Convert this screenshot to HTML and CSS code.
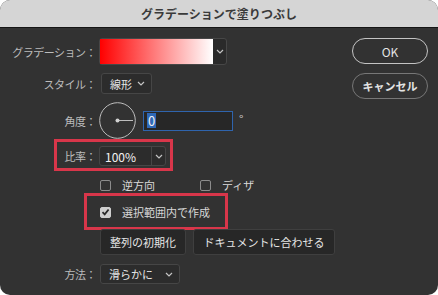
FILE: index.html
```html
<!DOCTYPE html>
<html lang="ja">
<head>
    <meta charset="UTF-8">
    <meta name="viewport" content="width=device-width, initial-scale=1.0">
    <title>グラデーションで塗りつぶし</title>
    <link rel="stylesheet" href="styles.css">
</head>
<body>
    <div class="dialog">
        <div class="titlebar">グラデーションで塗りつぶし</div>

        <div class="content">
            <div class="form">
                <!-- gradient -->
                <div class="row row-gradient">
                    <span class="lbl">グラデーション：</span>
                    <div class="gradient-picker">
                        <span class="swatch"></span>
                        <span class="picker-arrow">
                            <svg class="chev" width="8" height="5" viewBox="0 0 8 5"><path d="M1 1l3 3 3-3"/></svg>
                        </span>
                    </div>
                </div>

                <!-- style -->
                <div class="row row-style">
                    <span class="lbl">スタイル：</span>
                    <div class="select select-style">
                        <span>線形</span>
                        <svg class="chev" width="8" height="5" viewBox="0 0 8 5"><path d="M1 1l3 3 3-3"/></svg>
                    </div>
                </div>

                <!-- angle -->
                <div class="row row-angle">
                    <span class="lbl">角度：</span>
                    <div class="angle">
                        <svg class="dial" width="37" height="37" viewBox="0 0 37 37">
                            <circle cx="18.5" cy="18.5" r="17.8"/>
                            <line x1="18.5" y1="18.5" x2="34" y2="18.5"/>
                            <circle class="dot" cx="18.5" cy="18.5" r="2"/>
                        </svg>
                        <div class="num-input"><span class="sel">0</span></div>
                        <span class="deg">°</span>
                    </div>
                </div>

                <!-- ratio -->
                <div class="row row-ratio">
                    <span class="lbl">比率：</span>
                    <div class="select select-ratio">
                        <span class="val">100%</span>
                        <span class="split">
                            <svg class="chev" width="8" height="5" viewBox="0 0 8 5"><path d="M1 1l3 3 3-3"/></svg>
                        </span>
                    </div>
                    <span class="mark mark-ratio"></span>
                </div>

                <!-- options -->
                <div class="row row-checks">
                    <span></span>
                    <div class="checks">
                        <label class="check"><span class="box"></span>逆方向</label>
                        <label class="check"><span class="box"></span>ディザ</label>
                    </div>
                </div>

                <div class="row row-selection">
                    <span></span>
                    <label class="check">
                        <span class="box checked">
                            <svg width="9" height="8" viewBox="0 0 9 8"><path d="M1.5 4.2l2.2 2.2 3.9-4.9"/></svg>
                        </span>選択範囲内で作成
                    </label>
                    <span class="mark mark-selection"></span>
                </div>

                <div class="row row-buttons">
                    <span></span>
                    <div class="btns">
                        <button class="btn">整列の初期化</button>
                        <button class="btn">ドキュメントに合わせる</button>
                    </div>
                </div>

                <!-- method -->
                <div class="row row-method">
                    <span class="lbl">方法：</span>
                    <div class="select select-method">
                        <span>滑らかに</span>
                        <svg class="chev" width="8" height="5" viewBox="0 0 8 5"><path d="M1 1l3 3 3-3"/></svg>
                    </div>
                </div>
            </div>

            <div class="actions">
                <button class="pill pill-ok">OK</button>
                <button class="pill">キャンセル</button>
            </div>
        </div>
    </div>
</body>
</html>
```

FILE: styles.css
```css
* {
    box-sizing: border-box;
}

body {
    margin: 0;
    padding: 0;
    background: #ffffff;
    font-family: "Noto Sans CJK JP", "Noto Sans", sans-serif;
    font-size: 11px;
}

.dialog {
    width: 438px;
    height: 295px;
    background: #323232;
    border-radius: 10px;
    overflow: hidden;
}

.titlebar {
    height: 28px;
    line-height: 27px;
    background: #d5d5d5;
    border-bottom: 1px solid #151515;
    color: #3a3a3a;
    font-size: 12px;
    font-weight: bold;
    text-align: center;
}

.content {
    display: flex;
    padding: 10px 10px 0 0;
}

.form {
    flex: 1;
}

.row {
    position: relative;
    display: grid;
    grid-template-columns: 96px auto;
    column-gap: 4px;
    align-items: center;
    justify-items: start;
}

.lbl {
    justify-self: end;
    color: #bcbcbc;
    letter-spacing: -0.5px;
    white-space: nowrap;
}

.chev {
    display: block;
    fill: none;
    stroke: #c4c4c4;
    stroke-width: 1.2;
}

/* gradient picker */
.row-gradient {
    height: 27px;
}

.gradient-picker {
    display: flex;
    width: 128px;
    height: 27px;
    margin-left: -1px;
    border: 1px solid #474747;
    border-radius: 3px;
    background: #2a2a2a;
}

.swatch {
    width: 113px;
    height: 25px;
    background: linear-gradient(to right, #ff0000, #ffffff);
}

.picker-arrow {
    flex: 1;
    display: flex;
    align-items: center;
    justify-content: center;
}

/* selects */
.select {
    display: flex;
    align-items: center;
    justify-content: space-between;
    height: 21px;
    padding: 0 6px 0 8px;
    border: 1px solid #464646;
    border-radius: 3px;
    background: #2c2c2c;
    color: #e6e6e6;
    white-space: nowrap;
}

.row-style {
    height: 21px;
    margin-top: 8px;
}

.select-style {
    width: 51px;
    margin-left: 1px;
}

.row-angle {
    height: 36px;
    margin-top: 8px;
}

.angle {
    display: flex;
    align-items: center;
    margin-left: -1px;
}

.dial {
    display: block;
    fill: none;
    stroke: #bdbdbd;
    stroke-width: 1;
}

.dial .dot {
    fill: #d0d0d0;
    stroke: none;
}

.num-input {
    display: flex;
    align-items: center;
    width: 90px;
    height: 20px;
    margin-left: 7px;
    padding-left: 3px;
    border: 1px solid #2f64ad;
    background: #272727;
    color: #f0f0f0;
    font-size: 13px;
}

.num-input .sel {
    line-height: 15px;
    padding: 0 1px;
    background: #2e68b8;
}

.deg {
    margin-left: 6px;
    margin-top: -5px;
    color: #c8c8c8;
    font-size: 12px;
}

/* ratio */
.row-ratio {
    height: 20px;
    margin-top: 8px;
}

.select-ratio {
    width: 67px;
    height: 20px;
    margin-left: -1px;
    padding: 0 0 0 5px;
    font-size: 12px;
}

.select-ratio .val {
    color: #f2f2f2;
}

.split {
    display: flex;
    align-items: center;
    justify-content: center;
    width: 14px;
    height: 100%;
    border-left: 1px solid #464646;
}

.mark {
    position: absolute;
    border: 3px solid #d8364a;
    pointer-events: none;
}

.mark-ratio {
    left: 54px;
    top: -7px;
    width: 119px;
    height: 32px;
}

/* checkboxes */
.row-checks {
    height: 20px;
    margin-top: 9px;
}

.checks {
    display: flex;
}

.check {
    display: flex;
    align-items: center;
    width: 100px;
    color: #d8d8d8;
    white-space: nowrap;
}

.box {
    display: flex;
    align-items: center;
    justify-content: center;
    width: 11px;
    height: 11px;
    margin-right: 11px;
    border: 1px solid #8c8c8c;
    border-radius: 2px;
}

.box.checked {
    border-color: #cfcfcf;
    background: #cfcfcf;
}

.box svg {
    display: block;
    fill: none;
    stroke: #2a2a2a;
    stroke-width: 1.8;
}

.row-selection {
    height: 20px;
    margin-top: 7px;
}

.row-selection .check {
    width: auto;
}

.mark-selection {
    left: 84px;
    top: -9px;
    width: 144px;
    height: 37px;
}

/* buttons */
.row-buttons {
    height: 26px;
    margin-top: 7px;
}

.btns {
    display: flex;
    gap: 7px;
}

.btn {
    height: 26px;
    padding: 0;
    border: 1px solid #3f3f3f;
    border-radius: 3px;
    background: #272727;
    color: #e6e6e6;
    font-family: inherit;
    font-size: 11px;
    white-space: nowrap;
}

.btn:first-child {
    width: 86px;
}

.btn:last-child {
    width: 142px;
}

/* method */
.row-method {
    height: 20px;
    margin-top: 9px;
}

.select-method {
    width: 80px;
    height: 20px;
}

/* right side */
.actions {
    display: flex;
    flex-direction: column;
    gap: 9px;
    width: 76px;
}

.pill {
    height: 26px;
    border: 1px solid #777777;
    border-radius: 13px;
    background: transparent;
    color: #e4e4e4;
    font-family: inherit;
    font-size: 11px;
    font-weight: bold;
    white-space: nowrap;
}

.pill-ok {
    border: 1.5px solid #c4c4c4;
    font-size: 12px;
    font-weight: normal;
}
```
